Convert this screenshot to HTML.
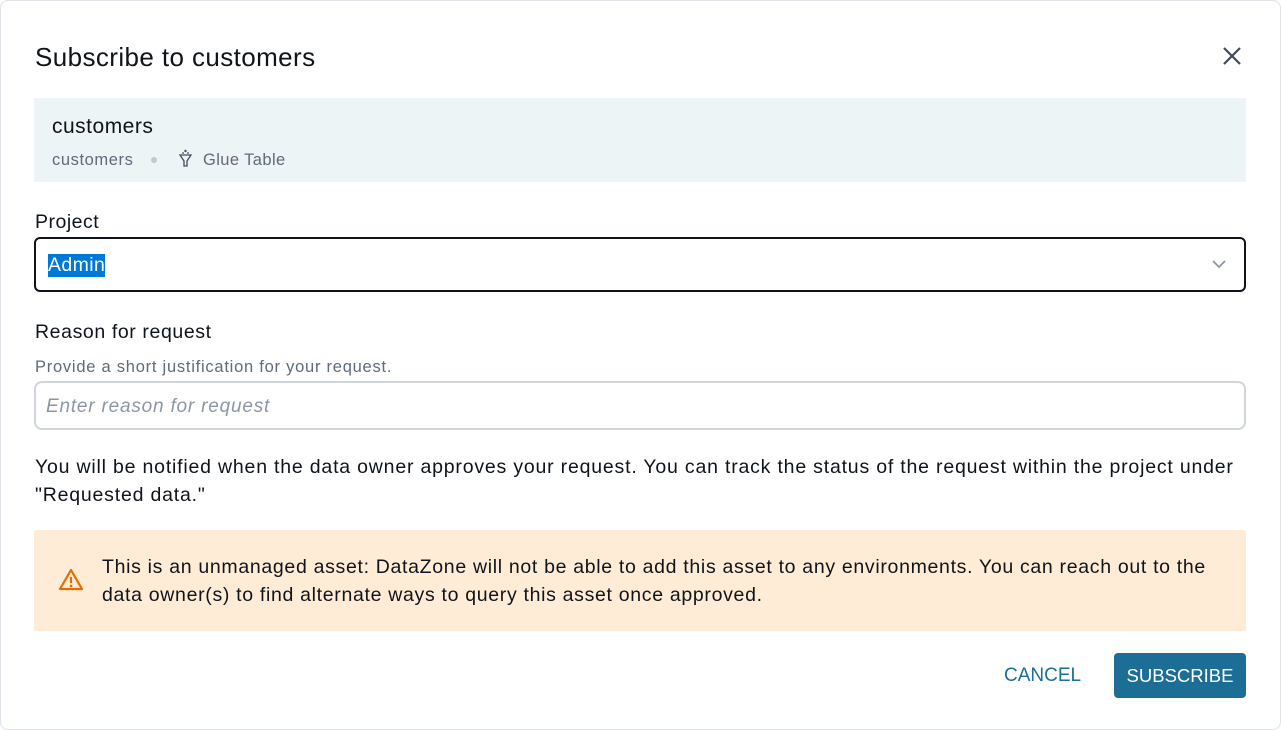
<!DOCTYPE html>
<html><head><meta charset="utf-8"><style>
*{box-sizing:border-box;margin:0;padding:0}
body{width:1281px;height:730px;background:#fff;font-family:"Liberation Sans",sans-serif;color:#0f141a;position:relative;overflow:hidden}
.frame{position:absolute;left:0;top:0;width:1281px;height:730px;border:1px solid #e0e3e8;border-radius:8px}
.abs{position:absolute;white-space:nowrap}
</style></head><body>
<div class="frame"></div>
<div class="abs" style="left:35px;top:42px;font-size:26px;letter-spacing:0.4px">Subscribe to customers</div>
<svg class="abs" style="left:1222px;top:46px" width="20" height="20" viewBox="0 0 20 20"><path d="M2 2L18 18M18 2L2 18" stroke="#414d5c" stroke-width="2.2"/></svg>
<div class="abs" style="left:34px;top:98px;width:1212px;height:84px;background:#edf4f6"></div>
<div class="abs" style="left:52px;top:115px;font-size:21px;letter-spacing:0.5px">customers</div>
<div class="abs" style="left:52px;top:151px;font-size:16.5px;color:#5f6b7a;letter-spacing:0.6px">customers</div>
<div class="abs" style="left:151px;top:157px;width:6px;height:6px;border-radius:3px;background:#c6c6cd"></div>
<svg class="abs" style="left:178px;top:149px" width="15" height="20" viewBox="0 0 15 20"><path d="M2 6h11l-4 6v5h-3v-5z" fill="none" stroke="#414d5c" stroke-width="1.3"/><circle cx="7.5" cy="2" r="1.2" fill="#414d5c"/><circle cx="5" cy="4" r="0.9" fill="#414d5c"/><circle cx="10" cy="4" r="0.9" fill="#414d5c"/></svg>
<div class="abs" style="left:203px;top:151px;font-size:16.5px;color:#5f6b7a;letter-spacing:0.4px">Glue Table</div>
<div class="abs" style="left:35px;top:211px;font-size:19.5px;letter-spacing:0.5px">Project</div>
<div class="abs" style="left:34px;top:237px;width:1212px;height:55px;border:2px solid #0f141a;border-radius:6px"></div>
<div class="abs" style="left:48px;top:254px;font-size:19.5px;color:#fff;background:#0078d7;line-height:23px;letter-spacing:0.4px">Admin</div>
<svg class="abs" style="left:1211px;top:258px" width="16" height="12" viewBox="0 0 16 12"><path d="M2 3l6 6 6-6" fill="none" stroke="#8c97a3" stroke-width="1.8"/></svg>
<div class="abs" style="left:35px;top:321px;font-size:19.5px;letter-spacing:0.6px">Reason for request</div>
<div class="abs" style="left:35px;top:358px;font-size:16.5px;color:#5f6b7a;letter-spacing:0.75px">Provide a short justification for your request.</div>
<div class="abs" style="left:34px;top:381px;width:1212px;height:49px;border:2px solid #d0d5dc;border-radius:8px"></div>
<div class="abs" style="left:46px;top:396px;font-size:19px;color:#8c97a3;font-style:italic;letter-spacing:0.8px">Enter reason for request</div>
<div class="abs" style="left:35px;top:453px;font-size:19.5px;line-height:28px;letter-spacing:0.8px">You will be notified when the data owner approves your request. You can track the status of the request within the project under<br>"Requested data."</div>
<div class="abs" style="left:34px;top:530px;width:1212px;height:101px;background:#ffecd6"></div>
<svg class="abs" style="left:58px;top:568px" width="26" height="24" viewBox="0 0 26 24"><path d="M13 2L24 21H2z" fill="none" stroke="#e56c00" stroke-width="2.2" stroke-linejoin="round"/><path d="M13 9v6" stroke="#e56c00" stroke-width="2.2"/><circle cx="13" cy="18" r="1.3" fill="#e56c00"/></svg>
<div class="abs" style="left:102px;top:553px;font-size:19.5px;line-height:28px;letter-spacing:0.68px">This is an unmanaged asset: DataZone will not be able to add this asset to any environments. You can reach out to the<br>data owner(s) to find alternate ways to query this asset once approved.</div>
<div class="abs" style="left:1004px;top:665px;font-size:19px;color:#1c6e96">CANCEL</div>
<div class="abs" style="left:1114px;top:653px;width:132px;height:45px;background:#1c6e96;border-radius:4px;color:#fff;font-size:18.5px;text-align:center;line-height:45px">SUBSCRIBE</div>
</body></html>
